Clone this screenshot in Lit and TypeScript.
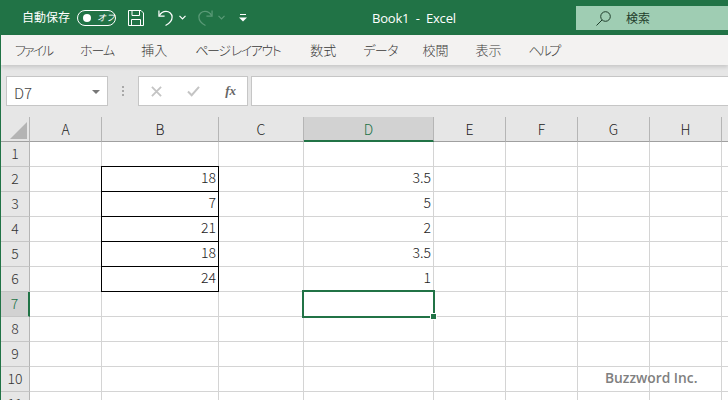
import { LitElement, html, css } from "lit";
import { customElement } from "lit/decorators.js";

const COLS = [
  { n: "A", w: 72 }, { n: "B", w: 117 }, { n: "C", w: 85 }, { n: "D", w: 130 },
  { n: "E", w: 72 }, { n: "F", w: 72 }, { n: "G", w: 72 }, { n: "H", w: 72 }, { n: "", w: 20 },
];
const DATA: Record<string, string> = {
  "2B": "18", "3B": "7", "4B": "21", "5B": "18", "6B": "24",
  "2D": "3.5", "3D": "5", "4D": "2", "5D": "3.5", "6D": "1",
};
const ROWS = [1, 2, 3, 4, 5, 6, 7, 8, 9, 10, 11];
const TABS: { t: string; k?: string }[] = [
  { t: "ファイル", k: "k-file" }, { t: "ホーム", k: "k-home" }, { t: "挿入", k: "k-ins" }, { t: "ページ レイアウト", k: "k-page" },
  { t: "数式" }, { t: "データ", k: "k-data" }, { t: "校閲" }, { t: "表示" }, { t: "ヘルプ", k: "k-help" },
];

@customElement("app-root")
export class AppRoot extends LitElement {
  static styles = css`
    :host { display: block; width: 728px; height: 400px; overflow: hidden; position: relative; background: #e6e6e6;
      font-family: "Noto Sans CJK JP", "Noto Sans", sans-serif; font-weight: 300; border-left: 1px solid #217346; box-sizing: border-box; }
    .title { height: 35px; margin-left: -1px; background: #217346; color: #fff; display: flex; align-items: center; position: relative; font-size: 12px; }
    .autosave { margin-left: 22px; width: 50px; font-weight: 400; white-space: nowrap; padding-bottom: 2px; }
    .toggle { margin-left: 5px; width: 37px; height: 14px; border: 1px solid #fff; border-radius: 9px; display: flex; align-items: center; box-sizing: content-box; }
    .knob { width: 8px; height: 8px; border-radius: 50%; background: #fff; margin-left: 5px; }
    .off { font-size: 9px; margin-left: 6px; font-style: italic; font-weight: 400; }
    .qa { display: block; }
    .save { margin-left: 12px; }
    .undo { margin-left: 14px; }
    .redo { margin-left: 11px; }
    .more { margin-left: 14px; }
    .chev { margin-left: 5px; }
    .doc { position: absolute; left: 372px; top: 9px; font-family: "Open Sans", sans-serif; font-size: 13px; line-height: 18px; letter-spacing: -0.2px; font-weight: 400; white-space: pre; }
    .search { position: absolute; left: 576px; top: 6px; width: 152px; height: 24px; background: #9fcdb3; color: #1f3d2b; display: flex; align-items: center; font-size: 12px; font-weight: 400; }
    .search svg { margin-left: 20px; }
    .search span { margin-left: 15px; padding-bottom: 2px; }
    .tabs { height: 30px; background: #f3f2f1; display: flex; align-items: center; font-size: 13px; color: #3b3a39; position: relative; box-shadow: 0 2px 4px rgba(0,0,0,.14); font-weight: 300; padding: 0 0 2px 14px; box-sizing: border-box; gap: 27px; font-feature-settings: "palt"; }
    .tabs span { white-space: nowrap; }
    .k-file { letter-spacing: -2px; margin-right: 1px; }
    .k-home { letter-spacing: -1px; }
    .k-ins { margin-right: 1px; }
    .k-page { letter-spacing: -1.450px; margin-right: 3px; }
    .k-data { letter-spacing: -0.600px; margin-right: -2.500px; }
    .k-help { letter-spacing: -2.200px; }
    .fbar { height: 52px; display: flex; padding: 11px 0 0 5px; box-sizing: border-box; align-items: flex-start; }
    .box { height: 30px; background: #fff; border: 1px solid #c6c6c6; box-sizing: border-box; }
    .name { width: 102px; display: flex; align-items: center; justify-content: space-between; padding: 2px 7px 0; font-size: 15px; color: #444; }
    .caret { width: 0; height: 0; border-left: 4px solid transparent; border-right: 4px solid transparent; border-top: 4px solid #777; }
    .grip { width: 30px; display: flex; flex-direction: column; align-items: center; justify-content: center; gap: 2px; height: 30px; }
    .grip i { width: 2px; height: 2px; background: #a8a8a8; display: block; }
    .fx { width: 110px; display: flex; align-items: center; justify-content: space-between; padding: 0 11px 0 12px; }
    .fxt { font-family: "Liberation Serif", serif; font-style: italic; font-weight: 700; font-size: 13px; color: #666; }
    .input { margin-left: 3px; flex: 1; border-right: 0; }
    .grid { display: flex; flex-direction: column; }
    .row { display: flex; height: 25px; flex: none; }
    .corner { width: 29px; position: relative; flex: none; border-right: 1px solid #b5b5b5; border-bottom: 1px solid #a0a0a0; box-sizing: border-box; }
    .corner svg { position: absolute; right: 2px; bottom: 2px; }
    .ch { box-sizing: border-box; flex: none; display: flex; align-items: center; justify-content: center; font-size: 14px; color: #222; border-right: 1px solid #b5b5b5; border-bottom: 1px solid #a0a0a0; background: #e6e6e6; padding-bottom: 1px; }
    .ch.sel { background: #d2d2d2; color: #217346; border-bottom: 2px solid #217346; padding-bottom: 0; }
    .rh { width: 29px; flex: none; box-sizing: border-box; display: flex; align-items: center; justify-content: center; font-size: 14px; color: #333; background: #e6e6e6; border-right: 1px solid #b5b5b5; border-bottom: 1px solid #c6c6c6; padding-bottom: 2px; }
    .rh.sel { background: #d2d2d2; color: #217346; border-right: 2px solid #217346; }
    .c { box-sizing: border-box; flex: none; background: #fff; border-right: 1px solid #d4d4d4; border-bottom: 1px solid #d4d4d4; font-size: 14px; color: #222; display: flex; align-items: center; justify-content: flex-end; padding: 0 2px 3px 0; line-height: 21px; }
    .c.b { position: relative; }
    .c.b::after { content: ""; position: absolute; left: -1px; top: -1px; right: -1px; bottom: -1px; border: 1px solid #000; pointer-events: none; }
    .selbox { position: absolute; left: 301px; top: 290px; width: 133px; height: 28px; box-sizing: border-box; border: 2px solid #217346; }
    .handle { position: absolute; right: -4px; bottom: -4px; width: 5px; height: 5px; background: #217346; border: 1px solid #fff; }
    .wm { position: absolute; left: 604px; top: 368px; font-family: "Open Sans", sans-serif; font-weight: 600; font-size: 13.800px; line-height: 20px; color: #808080; }
  `;

  render() {
    return html`
      <div class="title">
        <span class="autosave">自動保存</span>
        <span class="toggle"><span class="knob"></span><span class="off">オフ</span></span>
        <svg class="qa save" width="16" height="16" viewBox="0 0 16 16" fill="none" stroke="#fff" stroke-width="1">
          <path d="M.5.5h12.500l2.500 2.500v12.500H.5z"/><path d="M4 .5v5h7.500v-5M3.500 15.500v-6h9v6"/>
        </svg>
        <svg class="qa undo" width="16" height="18" viewBox="0 0 17 18" fill="none" stroke="#fff" stroke-width="1.300">
          <path d="M1 1v6h6"/><path d="M1.500 6.500C3 3.500 5.500 2 8.500 2c3.500 0 6.500 2.500 6.500 6 0 4-3 7-7 9"/>
        </svg>
        <svg class="qa chev" width="7" height="5" viewBox="0 0 7 5" fill="none" stroke="#fff" stroke-width="1.200"><path d="M.5.800l3 3 3-3"/></svg>
        <svg class="qa redo" width="16" height="18" viewBox="0 0 17 18" fill="none" stroke="#5a9a77" stroke-width="1.300">
          <path d="M16 1v6h-6"/><path d="M15.500 6.500C14 3.500 11.500 2 8.500 2 5 2 2 4.500 2 8c0 4 3 7 7 9"/>
        </svg>
        <svg class="qa chev" width="7" height="5" viewBox="0 0 7 5" fill="none" stroke="#5a9a77" stroke-width="1.200"><path d="M.5.800l3 3 3-3"/></svg>
        <svg class="qa more" width="8" height="8" viewBox="0 0 8 8" fill="#fff"><rect x="1" y="0" width="6" height="1"/><path d="M0 3.500h8l-4 4z"/></svg>
        <span class="doc">Book1  -  Excel</span>
        <div class="search">
          <svg width="15" height="15" viewBox="0 0 15 15" fill="none" stroke="#1f3d2b" stroke-width="1"><circle cx="9.500" cy="5.500" r="4.800"/><path d="M6 9l-5.500 5.500"/></svg>
          <span>検索</span>
        </div>
      </div>
      <div class="tabs">${TABS.map((t) => html`<span class="${t.k ?? ""}">${t.t}</span>`)}</div>
      <div class="fbar">
        <div class="box name"><span>D7</span><span class="caret"></span></div>
        <div class="grip"><i></i><i></i><i></i></div>
        <div class="box fx">
          <svg width="11" height="11" viewBox="0 0 12 12" stroke="#c4c4c4" stroke-width="2" fill="none"><path d="M1 1l10 10M11 1L1 11"/></svg>
          <svg width="13" height="11" viewBox="0 0 14 12" stroke="#c4c4c4" stroke-width="2.200" fill="none"><path d="M1 6l4 4 8-9"/></svg>
          <span class="fxt">fx</span>
        </div>
        <div class="box input"></div>
      </div>
      <div class="grid">
        <div class="row">
          <div class="corner"><svg width="17" height="17" viewBox="0 0 17 17"><path d="M17 0v17H0z" fill="#b4b4b4"/></svg></div>
          ${COLS.map((c) => html`<div class="ch ${c.n === "D" ? "sel" : ""}" style="width:${c.w}px">${c.n}</div>`)}
        </div>
        ${ROWS.map((r) => html`
          <div class="row">
            <div class="rh ${r === 7 ? "sel" : ""}">${r}</div>
            ${COLS.map((c) => {
              const boxed = c.n === "B" && r >= 2 && r <= 6;
              return html`<div class="c ${boxed ? "b" : ""}" style="width:${c.w}px">${DATA[`${r}${c.n}`] ?? ""}</div>`;
            })}
          </div>`)}
      </div>
      <div class="selbox"><div class="handle"></div></div>
      <div class="wm">Buzzword Inc.</div>
    `;
  }
}
